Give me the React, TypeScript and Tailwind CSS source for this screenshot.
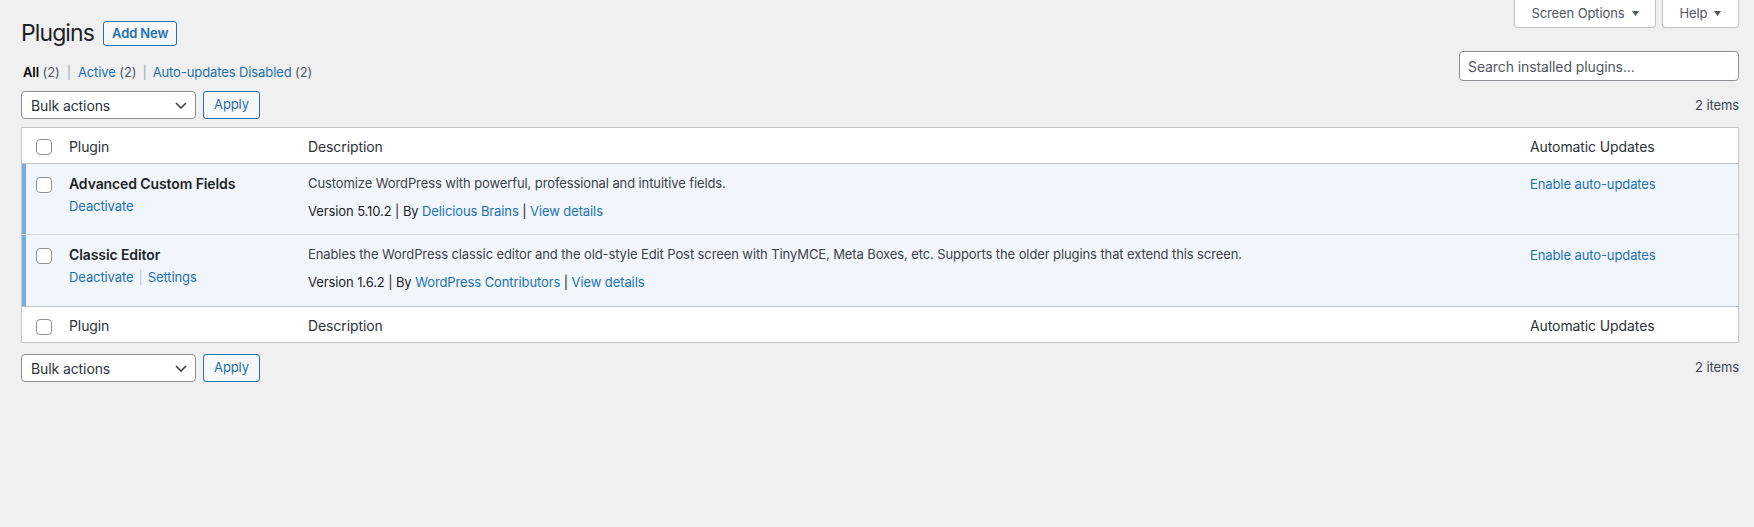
import React from 'react';

const Checkbox = () => (
  <span className="block w-4 h-4 rounded-[4px] border border-[#8c8f94] bg-white" />
);

const Caret = () => (
  <svg width="7" height="5" viewBox="0 0 7 5" className="ml-[7px]">
    <path d="M0 0h7L3.5 5z" fill="#50575e" />
  </svg>
);

const BulkActions = () => (
  <div className="flex gap-[7px]">
    <div className="w-[175px] h-[28px] flex items-center justify-between pl-[9px] pr-[8px] bg-white border border-[#8c8f94] rounded-[4px] text-[14px] text-[#2c3338]">
      <span>Bulk actions</span>
      <svg width="12" height="7" viewBox="0 0 12 7">
        <polyline points="1,1 6,6 11,1" fill="none" stroke="#3c434a" strokeWidth="1.6" />
      </svg>
    </div>
    <button className="w-[57px] h-[28px] border border-[#2271b1] rounded-[3px] bg-[#f6f7f7] text-[#2271b1] text-[13px]">
      Apply
    </button>
  </div>
);

const HeaderRow = ({ top }: { top?: boolean }) => (
  <div
    className={`grid grid-cols-[37px_239px_1fr_218px] h-[36px] text-[14px] text-[#2c3338] leading-[20px] ${
      top ? 'border-b border-[#c3c4c7]' : 'border-t border-[#c3c4c7]'
    }`}
  >
    <div className={`pl-[14px] ${top ? 'pt-[11px]' : 'pt-[12px]'}`}>
      <Checkbox />
    </div>
    <div className="px-[10px] pt-[9px]">Plugin</div>
    <div className="px-[10px] pt-[9px]">Description</div>
    <div className="px-[10px] pt-[9px]">Automatic Updates</div>
  </div>
);

type Plugin = {
  name: string;
  settings?: boolean;
  description: string;
  version: string;
  author: string;
};

const plugins: Plugin[] = [
  {
    name: 'Advanced Custom Fields',
    description: 'Customize WordPress with powerful, professional and intuitive fields.',
    version: '5.10.2',
    author: 'Delicious Brains',
  },
  {
    name: 'Classic Editor',
    settings: true,
    description:
      'Enables the WordPress classic editor and the old-style Edit Post screen with TinyMCE, Meta Boxes, etc. Supports the older plugins that extend this screen.',
    version: '1.6.2',
    author: 'WordPress Contributors',
  },
];

const PluginRow = ({ plugin, first }: { plugin: Plugin; first: boolean }) => (
  <div
    className={`grid grid-cols-[37px_239px_1fr_218px] bg-[#f0f6fc] shadow-[inset_4px_0_0_#72aee6] h-[71px] ${
      first ? 'border-b border-[#dcdcde]' : ''
    }`}
  >
    <div className="pl-[14px] pt-[13px]">
      <Checkbox />
    </div>
    <div className="px-[10px] pt-[8px]">
      <div className="text-[14px] leading-[24px] font-semibold text-[#1d2327]">{plugin.name}</div>
      <div className="leading-[20px] text-[#2271b1]">
        Deactivate
        {plugin.settings && (
          <>
            <span className="text-[#c3c4c7] mx-[5px]">|</span>
            Settings
          </>
        )}
      </div>
    </div>
    <div className="px-[10px] pt-[8px]">
      <div className="leading-[22px] text-[#3c434a]">{plugin.description}</div>
      <div className="mt-[7px] leading-[20px] text-[#1d2327]">
        Version {plugin.version} | By <span className="text-[#2271b1]">{plugin.author}</span> |{' '}
        <span className="text-[#2271b1]">View details</span>
      </div>
    </div>
    <div className="px-[10px] pt-[8px] leading-[24px] text-[#2271b1]">Enable auto-updates</div>
  </div>
);

export default function App() {
  return (
    <div className="min-h-screen bg-[#f0f0f1] pl-[21px] pr-[15px] text-[13px] tracking-[-0.1px] text-[#3c434a] font-[Inter,sans-serif]">
      <div className="flex justify-between items-start">
        <div className="pt-[18px]">
          <div className="flex items-center h-[30px]">
            <h1 className="text-[23px] leading-[30px] tracking-[-0.9px] font-normal text-[#1d2327]">Plugins</h1>
            <button className="ml-[9px] h-[25px] px-[8px] border border-[#2271b1] rounded-[3px] bg-[#f6f7f7] text-[#2271b1] text-[13px] font-semibold leading-none">
              Add New
            </button>
          </div>
          <div className="mt-[14px] h-[20px] leading-[20px] pl-[2px] text-[#50575e]">
            <span className="font-semibold text-black">All</span> (2)
            <span className="text-[#a7aaad] mx-[7px]">|</span>
            <span className="text-[#2271b1]">Active</span> (2)
            <span className="text-[#a7aaad] mx-[6px]">|</span>
            <span className="text-[#2271b1]">Auto-updates Disabled</span> (2)
          </div>
          <div className="mt-[9px]">
            <BulkActions />
          </div>
        </div>
        <div className="flex flex-col items-end">
          <div className="flex gap-[6px]">
            <button className="h-[28px] w-[142px] flex items-center justify-center bg-white border-x border-b border-[#c3c4c7] rounded-b-[4px] text-[13px] text-[#50575e]">
              Screen Options
              <Caret />
            </button>
            <button className="h-[28px] w-[77px] flex items-center justify-center bg-white border-x border-b border-[#c3c4c7] rounded-b-[4px] text-[13px] text-[#50575e]">
              Help
              <Caret />
            </button>
          </div>
          <input
            className="mt-[23px] w-[280px] h-[30px] px-[8px] bg-white border border-[#8c8f94] rounded-[4px] text-[14px] outline-none placeholder:text-[#50575e]"
            placeholder="Search installed plugins..."
          />
          <div className="mt-[15px] leading-[18px] text-[#3c434a]">2 items</div>
        </div>
      </div>

      <div className="mt-[8px] border border-[#c3c4c7] bg-white">
        <HeaderRow top />
        {plugins.map((p, i) => (
          <PluginRow key={p.name} plugin={p} first={i === 0} />
        ))}
        <HeaderRow />
      </div>

      <div className="mt-[11px] flex items-center justify-between">
        <BulkActions />
        <div className="text-[#3c434a]">2 items</div>
      </div>
    </div>
  );
}
